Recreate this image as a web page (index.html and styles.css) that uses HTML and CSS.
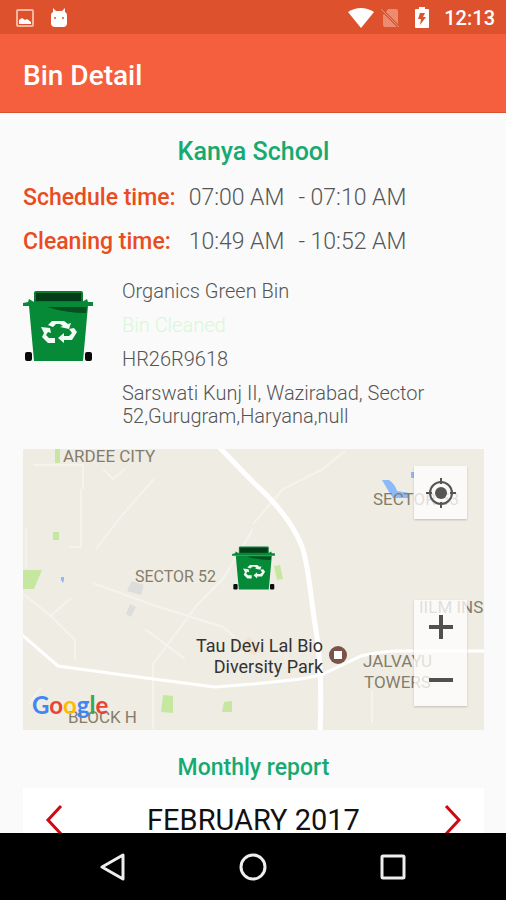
FILE: index.html
```html
<!DOCTYPE html>
<html lang="en">
<head>
    <meta charset="UTF-8">
    <meta name="viewport" content="width=device-width, initial-scale=1.0">
    <title>Bin Detail</title>
    <link rel="stylesheet" href="styles.css">
</head>
<body>
    <svg class="defs" aria-hidden="true">
        <symbol id="bin" viewBox="0 0 70 72">
            <path d="M13 1h45q2 0 2 2v10H11V3q0-2 2-2z" fill="#0a7a30"/>
            <path d="M13 3h45v8H13z" fill="#033d17"/>
            <path d="M6 9l5 3h48l5-3 1 3h5v4H0v-3l5-1z" fill="#078a37"/>
            <path d="M6 16h59l-5 55H11z" fill="#078a37"/>
            <path d="M24 17h40l-1 6q-20 0-39-6z" fill="#04501f"/>
            <rect x="2" y="62" width="7" height="9" rx="2" fill="#0a0a0a"/>
            <rect x="62" y="62" width="7" height="9" rx="2" fill="#0a0a0a"/>
            <g fill="#f2fbf4">
                <path d="M25 35l4-4h12l4 3 3-1-2 6-9-2 3-1-3-2h-4l-3 3z"/>
                <path d="M18 37l9 1 1 5-3-1-2 3 3 3h6v5h-7l-6-6 2-4z"/>
                <path d="M46 39l5-1 3 4-5 8h-8v3l-6-5 6-5v3h5l3-3z"/>
            </g>
        </symbol>
    </svg>

    <div class="status-bar">
        <div class="status-group">
            <svg width="18" height="18" viewBox="0 0 18 18"><rect x="1" y="1" width="16" height="16" rx="1" fill="none" stroke="#f6b5a1" stroke-width="2"/><path d="M3 15v-4l3-2 3 2 2-1 4 3v2z" fill="#fff"/></svg>
            <svg width="18" height="20" viewBox="0 0 18 20"><path d="M3 0l3 3h6l3-3 0 4q2 1 2 3v8q0 4-4 4H5q-4 0-4-4V7q0-2 2-3z" fill="#fff"/><circle cx="5" cy="10" r="1" fill="#de522d"/><circle cx="13" cy="10" r="1" fill="#de522d"/></svg>
        </div>
        <div class="status-group status-right">
            <svg width="26" height="20" viewBox="0 0 26 20"><path d="M0 4q13-8 26 0L13 20z" fill="#fff"/></svg>
            <svg width="20" height="20" viewBox="0 0 20 20"><path d="M8 1h8q2 0 2 2v13L6 4zM4 6l13 13H5q-2 0-2-2V7z" fill="#eb8c71"/><path d="M1 1l18 18" stroke="#eb8c71" stroke-width="1"/></svg>
            <svg width="16" height="22" viewBox="0 0 16 22"><path d="M5 0h6v2h3q1 0 1 1v17q0 1-1 1H2q-1 0-1-1V3q0-1 1-1h3z" fill="#fff"/><path d="M6 6h5l-2 4h3l-6 8 1-6H4z" fill="#de522d"/></svg>
            <span>12:13</span>
        </div>
    </div>

    <header class="app-bar">
        <h1>Bin Detail</h1>
    </header>

    <main class="content">
        <h2 class="place">Kanya School</h2>
        <dl class="times">
            <dt>Schedule time:</dt>
            <dd><span>07:00 AM</span><span>- 07:10 AM</span></dd>
            <dt>Cleaning time:</dt>
            <dd><span>10:49 AM</span><span>- 10:52 AM</span></dd>
        </dl>

        <section class="bin">
            <svg class="bin-icon" role="img" aria-label="Green bin"><use href="#bin"/></svg>
            <div class="bin-info">
                <p>Organics Green Bin</p>
                <p class="cleaned">Bin Cleaned</p>
                <p>HR26R9618</p>
                <p>Sarswati Kunj II, Wazirabad, Sector 52,Gurugram,Haryana,null</p>
            </div>
        </section>

        <section class="map">
            <svg class="map-canvas" viewBox="0 0 461 281" preserveAspectRatio="xMidYMid slice">
                <rect width="461" height="281" fill="#efece4"/>
                <g fill="#c5e7a0">
                    <path d="M32 0h5v14h-5zM30 83h6v8h-6zM0 121h19l-8 19H0zM251 117l6-1 3 14-6 1zM140 246l10 1v17l-12-1zM201 253l8-1v11h-10z"/>
                </g>
                <path d="M359 31h7q6 4 8 11l12 2v5h-16l-4-6zM38 128h3v3l-1 3-2-3zM388 23h3v6h-3z" fill="#8db9f8"/>
                <path d="M109 132l12 4-3 10-14-4zM107 155l6 3-5 10-5-3z" fill="#dddedb"/>
                <path d="M214 200l12-12 14 12-8 6z" fill="#f3e2cc"/>
                <g fill="none" stroke="#f6f3ed" stroke-width="2">
                    <path d="M10 16h50v24M80 20l10 10 12-10M131 30l-30 34-28 36M58 40v58H46M3 80v40"/>
                    <path d="M322 2l-22 18-40 20-30 35M230 80l-30 50-25 25-45 60v65M0 145l28 22 24 24v20M28 167l20-18M70 134l60 22 70 22 12 10M122 180l40 30M18 239l-12 16M349 242v32"/>
                </g>
                <path d="M196-2l34 35c20 18 38 38 48 62 8 18 10 60 15 86 4 26 6 60 4 102" fill="none" stroke="#fff" stroke-width="5"/>
                <path d="M-2 185l37 32 80 11 77 10 38-3 48-5 20-4 40-19q20-5 40-5h126" fill="none" stroke="#fff" stroke-width="3"/>

                <g class="area-labels">
                    <text x="40" y="13">ARDEE CITY</text>
                    <text x="112" y="133" class="small">SECTOR 52</text>
                    <text x="350" y="56">SECTOR 53</text>
                    <text x="396" y="164">IILM INS</text>
                    <text x="340" y="218">JALVAYU</text>
                    <text x="341" y="239">TOWERS</text>
                    <text x="45" y="274">BLOCK H</text>
                </g>
                <g class="poi-label">
                    <text x="300" y="203">Tau Devi Lal Bio</text>
                    <text x="300" y="224">Diversity Park</text>
                </g>
                <circle cx="315" cy="206" r="9" fill="#7b5349"/>
                <rect x="311" y="202" width="8" height="8" fill="#fff"/>
                <use href="#bin" x="209" y="97" width="43" height="44"/>
                <text class="google" x="9" y="265"><tspan fill="#4285f4">G</tspan><tspan fill="#ea4335">o</tspan><tspan fill="#fbbc05">o</tspan><tspan fill="#4285f4">g</tspan><tspan fill="#34a853">l</tspan><tspan fill="#ea4335">e</tspan></text>
            </svg>
            <div class="map-controls">
                <button type="button" class="map-button" aria-label="My location">
                    <svg width="32" height="32" viewBox="0 0 32 32"><circle cx="16" cy="16" r="11" fill="none" stroke="#555" stroke-width="2"/><circle cx="16" cy="16" r="6" fill="#555"/><path d="M16 1v6M16 25v6M1 16h6M25 16h6" stroke="#555" stroke-width="2"/></svg>
                </button>
                <div class="zoom-buttons">
                    <button type="button" class="map-button" aria-label="Zoom in">
                        <svg width="24" height="24" viewBox="0 0 24 24"><path d="M12 0v24M0 12h24" stroke="#505050" stroke-width="4"/></svg>
                    </button>
                    <button type="button" class="map-button" aria-label="Zoom out">
                        <svg width="24" height="24" viewBox="0 0 24 24"><path d="M0 12h24" stroke="#505050" stroke-width="4"/></svg>
                    </button>
                </div>
            </div>
        </section>

        <h3 class="report-title">Monthly report</h3>
        <section class="calendar">
            <button type="button" aria-label="Previous month">
                <svg width="18" height="32" viewBox="0 0 18 32"><path d="M16 2L3 16l13 14" fill="none" stroke="#cd0a12" stroke-width="3"/></svg>
            </button>
            <span>FEBRUARY 2017</span>
            <button type="button" aria-label="Next month">
                <svg width="18" height="32" viewBox="0 0 18 32"><path d="M2 2l13 14L2 30" fill="none" stroke="#cd0a12" stroke-width="3"/></svg>
            </button>
        </section>
    </main>

    <nav class="nav-bar">
        <button type="button" aria-label="Back">
            <svg width="28" height="28" viewBox="0 0 28 28"><path d="M24 2v24L3 14z" fill="none" stroke="#eee" stroke-width="3" stroke-linejoin="round"/></svg>
        </button>
        <button type="button" aria-label="Home">
            <svg width="28" height="28" viewBox="0 0 28 28"><circle cx="14" cy="14" r="12" fill="none" stroke="#eee" stroke-width="3"/></svg>
        </button>
        <button type="button" aria-label="Recent apps">
            <svg width="28" height="28" viewBox="0 0 28 28"><rect x="3" y="3" width="22" height="22" rx="1" fill="none" stroke="#eee" stroke-width="3"/></svg>
        </button>
    </nav>
</body>
</html>
```

FILE: styles.css
```css
* {
    box-sizing: border-box;
}
body {
    font-family: Roboto, sans-serif;
    display: flex;
    flex-direction: column;
    height: 100vh;
    margin: 0;
    background: #fafafa;
    color: #555;
}
h1, h2, h3, p, dl, dd {
    margin: 0;
}
button {
    display: flex;
    align-items: center;
    justify-content: center;
    padding: 0;
    border: 0;
    background: none;
    cursor: pointer;
}
svg {
    display: block;
}
.defs {
    position: absolute;
    width: 0;
    height: 0;
}
.status-bar {
    display: flex;
    justify-content: space-between;
    align-items: center;
    height: 34px;
    padding: 1px 11px 0 16px;
    background: #dd522d;
    color: #fff;
    font-size: 20px;
    font-weight: 500;
}
.status-group {
    display: flex;
    align-items: center;
    gap: 16px;
}
.status-right {
    gap: 14px;
}
.status-right svg:first-child {
    margin-right: -8px;
}
.app-bar {
    display: flex;
    align-items: center;
    height: 79px;
    padding: 4px 23px 0;
    border-bottom: 1px solid #d9512d;
    background: #f55f3d;
    color: #fff;
}
.app-bar h1 {
    font-size: 28px;
    font-weight: 500;
}
.content {
    flex: 1;
    min-height: 0;
    overflow: hidden;
    padding: 23px 22px 0 23px;
}
.place {
    color: #16aa71;
    font-size: 25px;
    line-height: 32px;
    font-weight: 500;
    text-align: center;
}
.times {
    display: grid;
    grid-template-columns: max-content 1fr;
    column-gap: 13px;
    padding-top: 8px;
    font-size: 23px;
    line-height: 44px;
    font-weight: 300;
}
.times dt {
    color: #e84c20;
    font-weight: 500;
}
.times dd {
    display: flex;
    gap: 14px;
}
.bin {
    display: flex;
    gap: 29px;
    padding: 16px 0 21px;
}
.bin-icon {
    flex: none;
    width: 70px;
    height: 72px;
    margin-top: 10px;
}
.bin-info {
    display: flex;
    flex-direction: column;
    gap: 11px;
    font-size: 20px;
    line-height: 23px;
    font-weight: 300;
}
.bin-info .cleaned {
    color: #d6f8d6;
}
.map {
    position: relative;
    height: 281px;
}
.map-canvas {
    width: 100%;
    height: 100%;
}
.area-labels {
    fill: #857d6b;
    font-size: 17px;
}
.area-labels .small {
    font-size: 16px;
}
.poi-label {
    fill: #333;
    font-size: 18px;
    text-anchor: end;
}
.google {
    font-family: Lato, sans-serif;
    font-size: 24px;
    font-weight: 700;
}
.map-controls {
    position: absolute;
    top: 17px;
    right: 17px;
    bottom: 24px;
    display: flex;
    flex-direction: column;
    justify-content: space-between;
}
.map-button {
    width: 53px;
    height: 53px;
    background: rgba(255, 255, 255, 0.75);
    box-shadow: 0 1px 2px rgba(0, 0, 0, 0.2);
}
.zoom-buttons {
    box-shadow: 0 1px 2px rgba(0, 0, 0, 0.2);
}
.zoom-buttons .map-button {
    box-shadow: none;
}
.report-title {
    padding: 22px 0 4px;
    color: #16aa71;
    font-size: 23px;
    line-height: 32px;
    font-weight: 500;
    text-align: center;
}
.calendar {
    display: flex;
    align-items: center;
    justify-content: space-between;
    height: 64px;
    padding: 0 22px;
    background: #fff;
    color: #111;
    font-size: 29px;
}
.nav-bar {
    display: flex;
    justify-content: center;
    align-items: center;
    gap: 112px;
    height: 67px;
    background: #000;
}
```
